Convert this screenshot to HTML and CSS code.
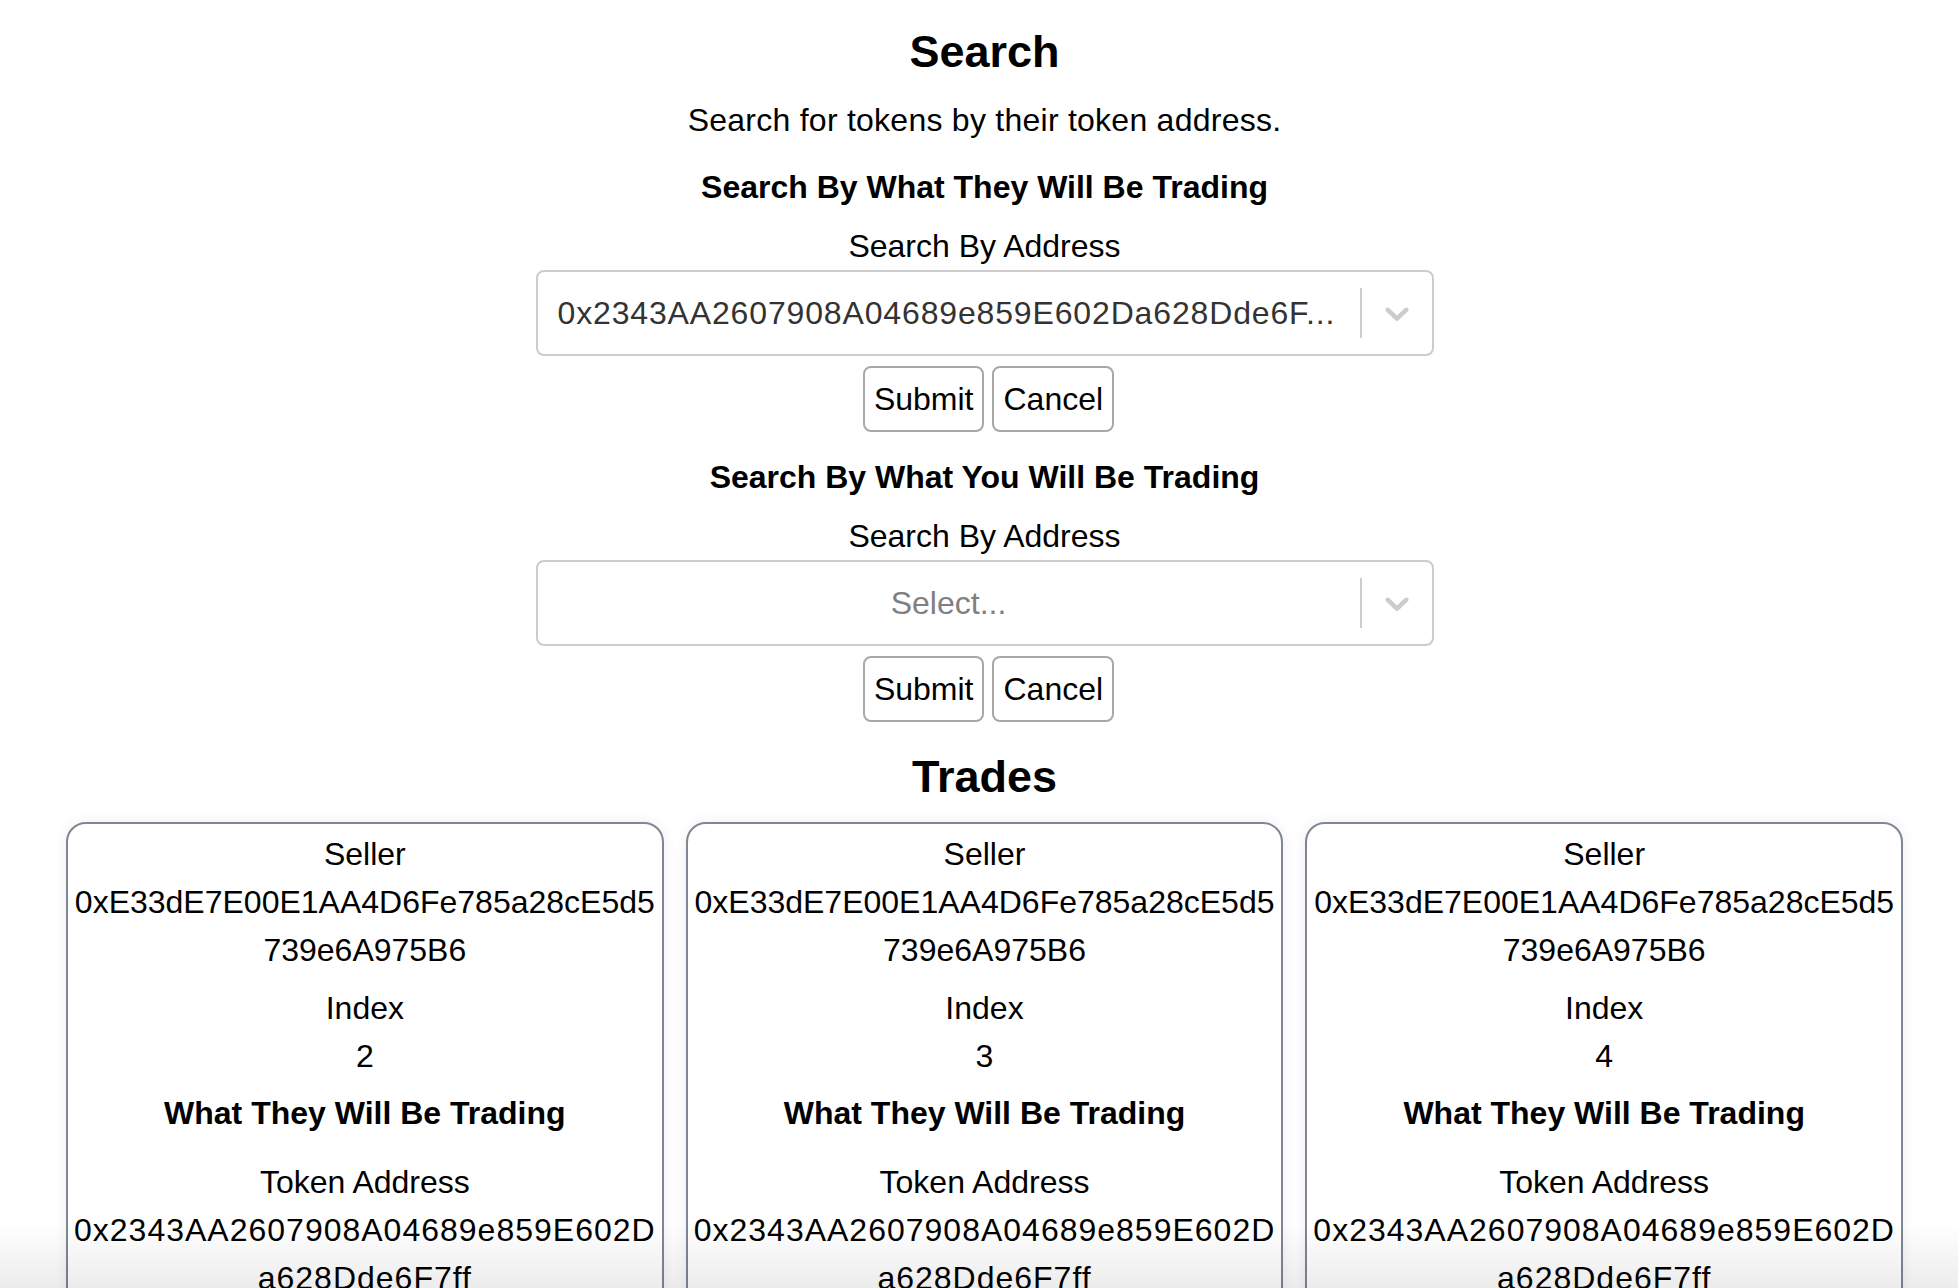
FILE: index.html
```html
<!DOCTYPE html>
<html lang="en">
<head>
<meta charset="utf-8">
<title>Search</title>
<link rel="stylesheet" href="styles.css">
</head>
<body>
<div class="page">
  <h1 class="title">Search</h1>
  <p class="subtitle">Search for tokens by their token address.</p>

  <section class="search-block">
    <h5 class="block-title">Search By What They Will Be Trading</h5>
    <label class="field-label">Search By Address</label>
    <div class="select">
      <div class="select-value"><span class="single-value" title="0x2343AA2607908A04689e859E602Da628Dde6F7ff">0x2343AA2607908A04689e859E602Da628Dde6F...</span></div>
      <span class="select-sep"></span>
      <div class="select-indicator">
        <svg viewBox="0 0 20 20" width="40" height="40" aria-hidden="true"><path d="M4.516 7.548c0.436-0.446 1.043-0.481 1.576 0l3.908 3.747 3.908-3.747c0.533-0.481 1.141-0.446 1.574 0 0.436 0.445 0.408 1.197 0 1.615-0.406 0.418-4.695 4.502-4.695 4.502-0.217 0.223-0.502 0.335-0.787 0.335s-0.57-0.112-0.789-0.335c0 0-4.287-4.084-4.695-4.502s-0.436-1.170 0-1.615z"/></svg>
      </div>
    </div>
    <div class="btn-row">
      <button class="btn" type="button">Submit</button>
      <button class="btn" type="button">Cancel</button>
    </div>
  </section>

  <section class="search-block second">
    <h5 class="block-title">Search By What You Will Be Trading</h5>
    <label class="field-label">Search By Address</label>
    <div class="select">
      <div class="select-value"><span class="placeholder">Select...</span></div>
      <span class="select-sep"></span>
      <div class="select-indicator">
        <svg viewBox="0 0 20 20" width="40" height="40" aria-hidden="true"><path d="M4.516 7.548c0.436-0.446 1.043-0.481 1.576 0l3.908 3.747 3.908-3.747c0.533-0.481 1.141-0.446 1.574 0 0.436 0.445 0.408 1.197 0 1.615-0.406 0.418-4.695 4.502-4.695 4.502-0.217 0.223-0.502 0.335-0.787 0.335s-0.57-0.112-0.789-0.335c0 0-4.287-4.084-4.695-4.502s-0.436-1.170 0-1.615z"/></svg>
      </div>
    </div>
    <div class="btn-row">
      <button class="btn" type="button">Submit</button>
      <button class="btn" type="button">Cancel</button>
    </div>
  </section>

  <h2 class="title trades-title">Trades</h2>

  <div class="cards">
    <div class="card">
      <p class="line">Seller</p>
      <p class="line">0xE33dE7E00E1AA4D6Fe785a28cE5d5<br>739e6A975B6</p>
      <p class="line gap-sm">Index</p>
      <p class="line">2</p>
      <h4 class="card-sub">What They Will Be Trading</h4>
      <p class="line gap-md">Token Address</p>
      <p class="line token-addr">0x2343AA2607908A04689e859E602D<br>a628Dde6F7ff</p>
    </div>
    <div class="card">
      <p class="line">Seller</p>
      <p class="line">0xE33dE7E00E1AA4D6Fe785a28cE5d5<br>739e6A975B6</p>
      <p class="line gap-sm">Index</p>
      <p class="line">3</p>
      <h4 class="card-sub">What They Will Be Trading</h4>
      <p class="line gap-md">Token Address</p>
      <p class="line token-addr">0x2343AA2607908A04689e859E602D<br>a628Dde6F7ff</p>
    </div>
    <div class="card">
      <p class="line">Seller</p>
      <p class="line">0xE33dE7E00E1AA4D6Fe785a28cE5d5<br>739e6A975B6</p>
      <p class="line gap-sm">Index</p>
      <p class="line">4</p>
      <h4 class="card-sub">What They Will Be Trading</h4>
      <p class="line gap-md">Token Address</p>
      <p class="line token-addr">0x2343AA2607908A04689e859E602D<br>a628Dde6F7ff</p>
    </div>
  </div>
</div>
<div class="bottom-shade"></div>
</body>
</html>
```

FILE: styles.css
```css
* { box-sizing: border-box; }

html, body {
  margin: 0;
  padding: 0;
  background: #ffffff;
}

body {
  font-family: "Liberation Sans", Arial, sans-serif;
  font-size: 32px;
  line-height: 48px;
  color: #000;
}

.page {
  margin: 0 55px 0 66px;
  padding-top: 25px;
  text-align: center;
}

.title {
  margin: 0;
  font-size: 45px;
  line-height: 54px;
  font-weight: 700;
}

.subtitle {
  margin: 17px 0 0;
  letter-spacing: 0.25px;
}

.search-block { margin-top: 19px; }
.search-block.second { margin-top: 21px; }

.block-title {
  margin: 0;
  font-size: 32px;
  line-height: 48px;
  font-weight: 700;
}

.field-label {
  display: block;
  margin-top: 11px;
}

.select {
  width: 898px;
  height: 86px;
  margin: 0 auto;
  display: flex;
  align-items: center;
  border: 2px solid #cccccc;
  border-radius: 8px;
  background: #fff;
}

.select-value {
  flex: 1;
  min-width: 0;
  padding: 4px 16px;
  text-align: center;
}

.single-value {
  display: block;
  margin-left: 4px;
  text-align: left;
  color: #333333;
  white-space: nowrap;
  letter-spacing: 0.85px;
}

.placeholder {
  color: #808080;
}

.select-sep {
  align-self: stretch;
  width: 2px;
  margin: 16px 0;
  background: #cccccc;
}

.select-indicator {
  width: 70px;
  display: flex;
  align-items: center;
  justify-content: center;
}

.select-indicator svg {
  fill: #cccccc;
  display: block;
}

.btn-row {
  margin-top: 10px;
  padding-left: 8px;
  display: flex;
  justify-content: center;
  gap: 8px;
}

.btn {
  height: 66px;
  padding: 0 9px;
  font-family: inherit;
  font-size: 32px;
  line-height: 40px;
  color: #000;
  background: #fff;
  border: 2px solid #a8a8a8;
  border-radius: 8px;
}

.trades-title {
  margin-top: 28px;
}

.cards {
  margin-top: 18px;
  display: grid;
  grid-template-columns: repeat(3, 1fr);
  gap: 22px;
}

.card {
  border: 2px solid #7e8793;
  border-radius: 20px;
  padding: 6px 4px 8px;
  box-shadow: 0 0 14px rgba(0, 0, 0, 0.07);
  background: #fff;
}

.line {
  margin: 0;
  white-space: nowrap;
}

.gap-sm { margin-top: 10px; }
.gap-md { margin-top: 21px; }

.token-addr { letter-spacing: 1px; }

.card-sub {
  margin: 9px 0 0;
  font-size: 32px;
  line-height: 48px;
  font-weight: 700;
}

.bottom-shade {
  position: fixed;
  left: 0;
  right: 0;
  bottom: 0;
  height: 64px;
  pointer-events: none;
  background: linear-gradient(to bottom, rgba(0, 0, 0, 0), rgba(0, 0, 0, 0.075));
}
```
